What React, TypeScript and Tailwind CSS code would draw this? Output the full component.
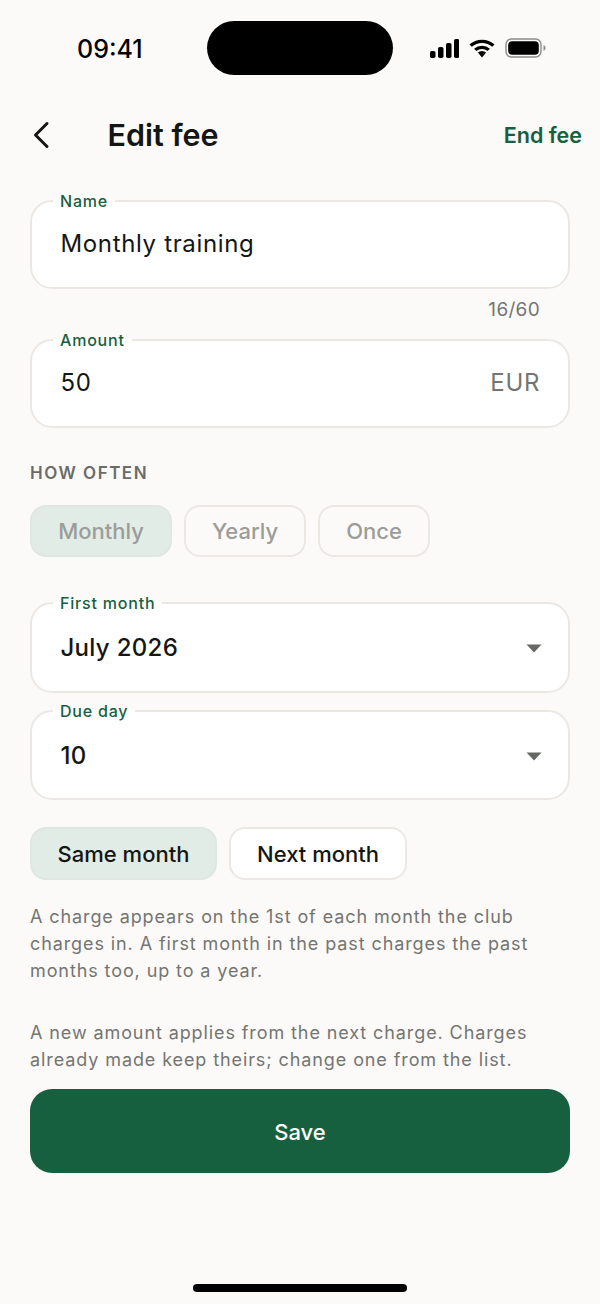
import type { ReactNode } from 'react'

const GREEN = 'text-[#17603f]'

function Field({ label, children, h }: { label: string; children: ReactNode; h: string }) {
  return (
    <fieldset className="border-2 border-[#ebe8e4] rounded-[22px] bg-white pl-[28.5px] pr-[28px] min-w-0">
      <legend className={`-ml-[7.5px] px-[7px] text-[16px] leading-[20px] font-medium tracking-[0.8px] ${GREEN}`}>{label}</legend>
      <div className={`flex items-center justify-between ${h}`}>{children}</div>
    </fieldset>
  )
}

function Caret() {
  return (
    <svg width="16" height="9" viewBox="0 0 16 9" className="mr-[-2px]">
      <path d="M0.5 0.5h15L8 8.5z" fill="#666864" />
    </svg>
  )
}

function Chip({ children, className }: { children: ReactNode; className: string }) {
  return (
    <div className={`flex items-center justify-center rounded-[16px] border-2 pt-[1px] text-[22px] font-medium ${className}`}>
      {children}
    </div>
  )
}

export default function App() {
  return (
    <div className="w-[600px] h-[1304px] bg-[#fcfaf8] text-[#141614] overflow-hidden flex flex-col font-['Inter',sans-serif]">

      {/* status bar */}
      <div className="h-[75px] pt-[21px] flex items-center shrink-0">
        <div className="w-[207px] pl-[77px] pt-[2px] text-[25px] font-medium text-black leading-none">09:41</div>
        <div className="w-[186px] h-[54px] bg-black rounded-full" />
        <div className="flex items-center ml-[37px] gap-[10px]">
          <svg width="29" height="19" viewBox="0 0 29 19">
            <rect x="0" y="12" width="5.5" height="7" rx="1.8" fill="#000" />
            <rect x="8" y="8" width="5.5" height="11" rx="1.8" fill="#000" />
            <rect x="16" y="4" width="5.5" height="15" rx="1.8" fill="#000" />
            <rect x="24" y="0" width="5.5" height="19" rx="1.8" fill="#000" />
          </svg>
          <svg width="26" height="19" viewBox="0 0 24 19" preserveAspectRatio="none">
            <path d="M1.5 6.6a15 15 0 0 1 21 0" fill="none" stroke="#000" strokeWidth="3.2" />
            <path d="M5.8 10.9a9 9 0 0 1 12.4 0" fill="none" stroke="#000" strokeWidth="3.2" />
            <path d="M8.2 13.6a5.4 5.4 0 0 1 7.6 0L12 18.5z" fill="#000" />
          </svg>
          <svg width="41" height="20" viewBox="0 0 41 20">
            <rect x="1" y="1" width="35" height="18" rx="5.5" fill="none" stroke="#8c8c8c" strokeWidth="1.4" />
            <rect x="3.2" y="3.2" width="30.6" height="13.6" rx="4" fill="#000" />
            <path d="M38.5 7v6c1.2-.4 2-1.6 2-3s-.8-2.6-2-3z" fill="#8c8c8c" />
          </svg>
        </div>
      </div>

      {/* header */}
      <div className="h-[60px] mt-[30px] ml-[30px] mr-[18px] flex items-center shrink-0">
        <svg width="22" height="28" viewBox="0 0 22 28" className="mr-[55.5px]">
          <path d="M17 2.5 5.5 14 17 25.5" fill="none" stroke="#141614" strokeWidth="3" strokeLinecap="round" strokeLinejoin="round" />
        </svg>
        <h1 className="text-[30.5px] font-semibold leading-none">Edit fee</h1>
        <span className={`ml-auto text-[21.5px] font-semibold ${GREEN}`}>End fee</span>
      </div>

      {/* form */}
      <div className="px-[30px] mt-[26px] flex flex-col">
        <Field label="Name" h="h-[76px] pb-[10px]">
          <span className="text-[24px] tracking-[0.65px]">Monthly training</span>
        </Field>
        <p className="text-right pr-[30px] text-[19px] leading-[23px] mt-[9px] text-[#737572] tracking-[0.3px]">16/60</p>

        <div className="mt-[9px]">
          <Field label="Amount" h="h-[76px] pb-[10px]">
            <span className="text-[24px] tracking-[0.65px]">50</span>
            <span className="text-[24px] text-[#737572] tracking-[0.65px]">EUR</span>
          </Field>
        </div>

        <p className="mt-[35px] text-[17px] leading-[20px] font-semibold tracking-[1.5px] text-[#6a6c69]">HOW OFTEN</p>

        <div className="mt-[22px] flex gap-[12px] text-[#9a9d9a]">
          <Chip className="w-[142px] h-[52px] bg-[#e2ece6] border-[#dfe7e1]">Monthly</Chip>
          <Chip className="w-[122px] h-[52px] border-[#ebe8e4]">Yearly</Chip>
          <Chip className="w-[112px] h-[52px] border-[#ebe8e4]">Once</Chip>
        </div>

        <div className="mt-[36px] flex flex-col gap-[8px]">
          <Field label="First month" h="h-[78px] pb-[8px]">
            <span className="text-[24px] font-medium tracking-[0.3px]">July 2026</span>
            <Caret />
          </Field>
          <Field label="Due day" h="h-[77px] pb-[7px]">
            <span className="text-[24px] font-medium tracking-[0.3px]">10</span>
            <Caret />
          </Field>
        </div>

        <div className="mt-[27px] flex gap-[12px]">
          <Chip className="w-[187px] h-[53px] bg-[#e2ece6] border-[#dfe7e1]">Same month</Chip>
          <Chip className="w-[178px] h-[53px] bg-white border-[#ebe8e4]">Next month</Chip>
        </div>

        <p className="mt-[23px] text-[18px] leading-[27px] text-[#737572] tracking-[0.9px]">
          A charge appears on the 1st of each month the club charges in. A first month in the past charges the past months too, up to a year.
        </p>
        <p className="mt-[35px] text-[18px] leading-[27px] text-[#737572] tracking-[0.9px]">
          A new amount applies from the next charge. Charges already made keep theirs; change one from the list.
        </p>

        <button className="mt-[16px] h-[84px] pt-[2px] rounded-[22px] bg-[#166040] text-white text-[22px] font-medium">Save</button>
      </div>

      {/* home indicator */}
      <div className="mt-auto mb-[12px] mx-auto w-[214px] h-[8px] rounded-full bg-black shrink-0" />
    </div>
  )
}
